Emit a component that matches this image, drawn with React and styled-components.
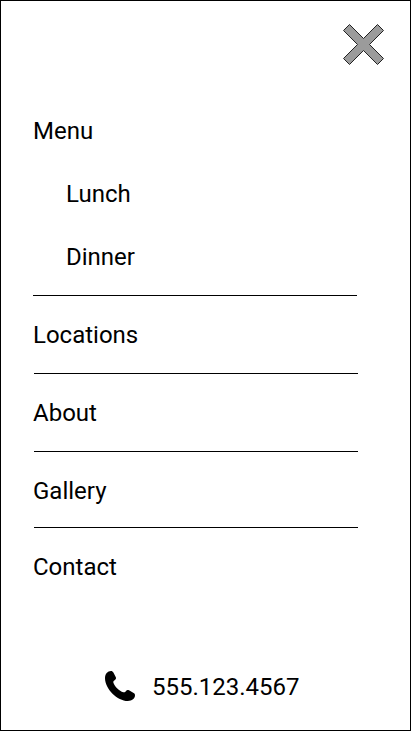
import React from "react";
import styled, { createGlobalStyle } from "styled-components";

const GlobalStyle = createGlobalStyle`
  * { box-sizing: border-box; }
  body { margin: 0; background: #fff; }
`;

const Screen = styled.main`
  display: flex;
  flex-direction: column;
  width: 411px;
  height: 731px;
  border: 1px solid #000;
  background: #fff;
  color: #000;
  font: 400 24px/28px Roboto, sans-serif;
  overflow: hidden;
`;

const Header = styled.header`
  display: flex;
  justify-content: flex-end;
  height: 91px;
  padding: 22px 25px 0 0;
`;

const CloseButton = styled.button`
  display: block;
  width: 43px;
  height: 43px;
  padding: 0;
  border: 0;
  background: none;
`;

const Nav = styled.nav`
  display: flex;
  flex-direction: column;
  padding-left: 32px;
`;

const NavRow = styled.a`
  display: block;
  height: ${(p) => p.$height}px;
  padding-top: 25px;
  padding-left: ${(p) => (p.$nested ? 33 : 0)}px;
`;

const Divider = styled.hr`
  width: 324px;
  height: 1px;
  margin: 0 0 0 ${(p) => p.$indent || 0}px;
  border: 0;
  background: #000;
`;

const Phone = styled.footer`
  display: flex;
  align-items: flex-start;
  gap: 17px;
  margin-top: 73px;
  padding-left: 104px;
`;

const PhoneIcon = styled.svg`
  width: 30px;
  height: 30px;
`;

const PhoneNumber = styled.span`
  padding-top: 2px;
`;

export default function App() {
  return (
    <Screen>
      <GlobalStyle />
      <Header>
        <CloseButton aria-label="Close">
          <svg width="43" height="43" viewBox="0 0 43 43">
            <path
              d="M7.5 1.5 21.5 15.5 35.5 1.5 41.5 7.5 27.5 21.5 41.5 35.5 35.5 41.5 21.5 27.5 7.5 41.5 1.5 35.5 15.5 21.5 1.5 7.5Z"
              fill="#9b9b9b"
              stroke="#222"
              strokeLinejoin="round"
            />
          </svg>
        </CloseButton>
      </Header>
      <Nav>
        <NavRow $height={63}>Menu</NavRow>
        <NavRow $height={63} $nested>Lunch</NavRow>
        <NavRow $height={77} $nested>Dinner</NavRow>
        <Divider />
        <NavRow $height={77}>Locations</NavRow>
        <Divider $indent={1} />
        <NavRow $height={77}>About</NavRow>
        <Divider $indent={1} />
        <NavRow $height={75}>Gallery</NavRow>
        <Divider $indent={1} />
        <NavRow $height={70}>Contact</NavRow>
      </Nav>
      <Phone>
        <PhoneIcon viewBox="0 0 30 30" aria-hidden="true">
          <path d="M6 0C7.2 0 7.8 .5 8.4 1.6L10.7 6C11.3 7.2 11.1 7.9 10.2 8.7C8.9 9.7 8 10.3 8.4 11.7C9.8 15.8 14.2 20 18.3 21.2C19.7 21.6 20.2 20.8 21.2 19.7C22 18.8 22.8 18.7 24 19.3L28.2 21.7C29.5 22.4 30 23 30 24.3C30 27.5 27 30 22.8 30C12.5 30 0 18 0 7.2C0 3 2.6 0 6 0Z" />
        </PhoneIcon>
        <PhoneNumber>555.123.4567</PhoneNumber>
      </Phone>
    </Screen>
  );
}
